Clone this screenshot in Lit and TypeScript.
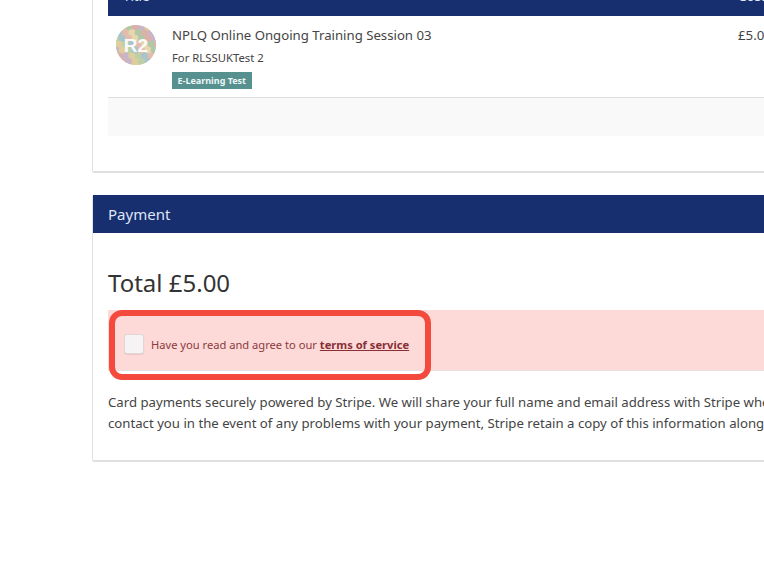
import { LitElement, html, css, svg } from "lit";
import { customElement } from "lit/decorators.js";

const cols = ["#e3bcae", "#dfce9c", "#b0c8a8", "#a8c4cc", "#c8b5ca", "#e6d7ae", "#bccfa8", "#dcb0a8"];
const dots: unknown[] = [];
for (let r = 0; r < 7; r++) {
  for (let c = 0; c < 7; c++) {
    const x = c * 6.4 + (r % 2 ? 3.2 : 0);
    const y = r * 5.8 + 2;
    dots.push(svg`<circle cx=${x} cy=${y} r="3.6" fill=${cols[(r * 3 + c * 5) % cols.length]}></circle>`);
  }
}

@customElement("app-root")
export class AppRoot extends LitElement {
  static styles = css`
    :host { display: block; width: 764px; height: 574px; overflow: hidden; position: relative; background: #fff;
      font-family: "Noto Sans", "Open Sans", sans-serif; color: #333; font-size: 14px; }
    .page { width: 1000px; margin: -24px 0 0 92px; display: flex; flex-direction: column; gap: 22px; }
    .card { background: #fff; border: 1px solid #e2e2e2; border-top-color: #eee; border-bottom: 2px solid #e0e0e0; box-sizing: border-box; border-radius: 2px; }
    .card.first { padding: 0 15px; height: 197px; }
    .thead { height: 39px; background: #172e6f; color: #dfe6f5; display: flex; justify-content: space-between; align-items: flex-end; padding-bottom: 10px; box-sizing: border-box; }
    .thead span { padding-left: 15px; font-size: 13.3px; line-height: 20px; }
    .thead .cost { flex: 0 0 338px; box-sizing: border-box; padding: 0; }
    .row { height: 82px; box-sizing: border-box; border-bottom: 1px solid #ddd; display: flex; }
    .avatar { width: 40px; height: 40px; margin: 9px 0 0 8px; flex: none; position: relative; display: flex; align-items: center; justify-content: center; }
    .avatar svg { position: absolute; inset: 0; }
    .avatar b { position: relative; color: #fff; font-size: 19px; line-height: 1; font-family: "Liberation Sans", sans-serif; opacity: .92; }
    .info { margin-left: 16px; padding-top: 9px; flex: 1; }
    .title { font-size: 13.2px; line-height: 20px; color: #444; }
    .sub { font-size: 11.3px; line-height: 16px; margin-top: 5px; color: #444; }
    .badge { display: inline-block; background: #56908f; color: #eef7f6; font-size: 9px; font-weight: 700; line-height: 17px; height: 17px; padding: 0 5.5px; margin-top: 6px; vertical-align: top; }
    .price { flex: 0 0 338px; padding-top: 9px; font-size: 13.3px; line-height: 20px; color: #444; }
    .gray { height: 38px; background: #f9f9f9; }
    .phead { height: 38px; background: #172e6f; color: #dfe6f5; font-size: 15px; line-height: 38px; padding-left: 15px; margin-top: -1px; }
    .pbody { padding: 0 15px; height: 227px; box-sizing: border-box; }
    h2 { margin: 0; padding-top: 33px; font-size: 24px; line-height: 34px; font-weight: 400; color: #333; }
    .alert { margin-top: 10px; height: 61px; background: #fdd9d8; border-bottom: 1px solid #e6e0df; box-sizing: border-box; display: flex; align-items: center; padding: 9px 0 0 16px; color: #8c3a3c; font-size: 11.15px; }
    .check { width: 20px; height: 20px; flex: none; box-sizing: border-box; background: #f5f3f3; border: 1px solid #e3d6d6; border-radius: 3px; box-shadow: 0 1px 1px rgba(0,0,0,.08); margin-right: 7px; margin-top: -2px; }
    .alert a { color: #863036; font-weight: 700; text-decoration: underline; }
    .alert span { white-space: pre; }
    p { margin: 21px 0 0; font-size: 13.2px; line-height: 21px; color: #444; white-space: nowrap; }
    .mark { position: absolute; left: 109px; top: 310px; width: 322px; height: 70px; box-sizing: border-box; border: 6.5px solid #f44a3e; border-radius: 13px; }
  `;

  render() {
    return html`
      <div class="page">
        <section class="card first">
          <div class="thead"><span>Title</span><span class="cost">Cost</span></div>
          <div class="row">
            <div class="avatar">
              <svg width="40" height="40" viewBox="0 0 40 40">
                <defs><clipPath id="c"><circle cx="20" cy="20" r="20"></circle></clipPath></defs>
                <g clip-path="url(#c)"><rect width="40" height="40" fill="#d8c9a8"></rect>${dots}</g>
              </svg>
              <b>R2</b>
            </div>
            <div class="info">
              <div class="title">NPLQ Online Ongoing Training Session 03</div>
              <div class="sub">For RLSSUKTest 2</div>
              <span class="badge">E-Learning Test</span>
            </div>
            <div class="price">£5.00</div>
          </div>
          <div class="gray"></div>
        </section>
        <section class="card">
          <div class="phead">Payment</div>
          <div class="pbody">
            <h2>Total £5.00</h2>
            <div class="alert">
              <div class="check"></div>
              <span>Have you read and agree to our <a>terms of service</a></span>
            </div>
            <p>Card payments securely powered by Stripe. We will share your full name and email address with Stripe when you pay so they can<br>contact you in the event of any problems with your payment, Stripe retain a copy of this information alongside your payment.</p>
          </div>
        </section>
      </div>
      <div class="mark"></div>
    `;
  }
}
